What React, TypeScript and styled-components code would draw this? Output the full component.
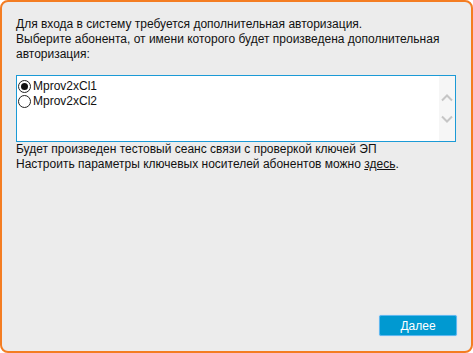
import React from "react";
import styled, { createGlobalStyle } from "styled-components";

const GlobalStyle = createGlobalStyle`
  html, body {
    margin: 0;
    padding: 0;
    width: 473px;
    height: 353px;
    overflow: hidden;
    background: #ffffff;
  }
  #root {
    height: 100%;
  }
`;

const Window = styled.div`
  box-sizing: border-box;
  height: 353px;
  width: 473px;
  display: flex;
  flex-direction: column;
  margin: 0;
  border: 2px solid #f47d22;
  border-radius: 8px;
  background: #ececec;
  padding: 15px 15px 15px 14px;
  font-family: "Liberation Sans", Arial, sans-serif;
  font-size: 12px;
  line-height: 15px;
  color: #111;
`;

const Paragraph = styled.p`
  margin: 0;
`;

const ListBox = styled.div`
  box-sizing: border-box;
  margin-top: 13px;
  height: 67px;
  display: flex;
  border: 1px solid #1b9ad6;
  background: #ffffff;
`;

const Items = styled.div`
  flex: 1;
  display: flex;
  flex-direction: column;
  padding: 3px 0 0 1px;
`;

const Item = styled.label`
  display: flex;
  align-items: center;
  gap: 2px;
  height: 15px;
`;

const RadioMark = styled.span<{ $checked?: boolean }>`
  box-sizing: border-box;
  width: 13px;
  height: 13px;
  border-radius: 50%;
  border: 1px solid #222;
  background: #fff;
  display: flex;
  align-items: center;
  justify-content: center;
  &::after {
    content: "";
    width: 7px;
    height: 7px;
    border-radius: 50%;
    background: ${({ $checked }) => ($checked ? "#111" : "transparent")};
  }
`;

const ScrollTrack = styled.div`
  width: 16px;
  background: #f6f6f6;
  display: flex;
  flex-direction: column;
  align-items: center;
  justify-content: center;
  gap: 13px;
`;

const Chevron: React.FC<{ down?: boolean }> = ({ down }) => (
  <svg width="12" height="8" viewBox="0 0 12 8">
    <path
      d={down ? "M1 1.5 L6 6.5 L11 1.5" : "M1 6.5 L6 1.5 L11 6.5"}
      fill="none"
      stroke="#c6c6c6"
      strokeWidth="2"
    />
  </svg>
);

const Note = styled.div`
  margin-top: 0;
`;

const Link = styled.a`
  color: #111;
  text-decoration: underline;
  cursor: pointer;
`;

const Footer = styled.div`
  margin-top: auto;
  display: flex;
  justify-content: flex-end;
`;

const Button = styled.button`
  box-sizing: border-box;
  width: 78px;
  height: 21px;
  margin-right: -1px;
  border: 1px solid #5fb8f0;
  border-radius: 2px;
  background: #0099d1;
  color: #ffffff;
  font-family: "Liberation Sans", Arial, sans-serif;
  font-size: 12px;
  padding: 0;
  box-shadow: 0 0 1px #8ecbff;
`;

const subscribers = [
  { id: "1", name: "Mprov2xCl1", checked: true },
  { id: "2", name: "Mprov2xCl2", checked: false },
];

const App: React.FC = () => {
  return (
    <>
      <GlobalStyle />
      <Window>
        <Paragraph>
          Для входа в систему требуется дополнительная авторизация.
          <br />
          Выберите абонента, от имени которого будет произведена дополнительная
          <br />
          авторизация:
        </Paragraph>
        <ListBox>
          <Items>
            {subscribers.map((s) => (
              <Item key={s.id}>
                <RadioMark $checked={s.checked} />
                {s.name}
              </Item>
            ))}
          </Items>
          <ScrollTrack>
            <Chevron />
            <Chevron down />
          </ScrollTrack>
        </ListBox>
        <Note>
          Будет произведен тестовый сеанс связи с проверкой ключей ЭП
          <br />
          Настроить параметры ключевых носителей абонентов можно <Link>здесь</Link>.
        </Note>
        <Footer>
          <Button>Далее</Button>
        </Footer>
      </Window>
    </>
  );
};

export default App;
